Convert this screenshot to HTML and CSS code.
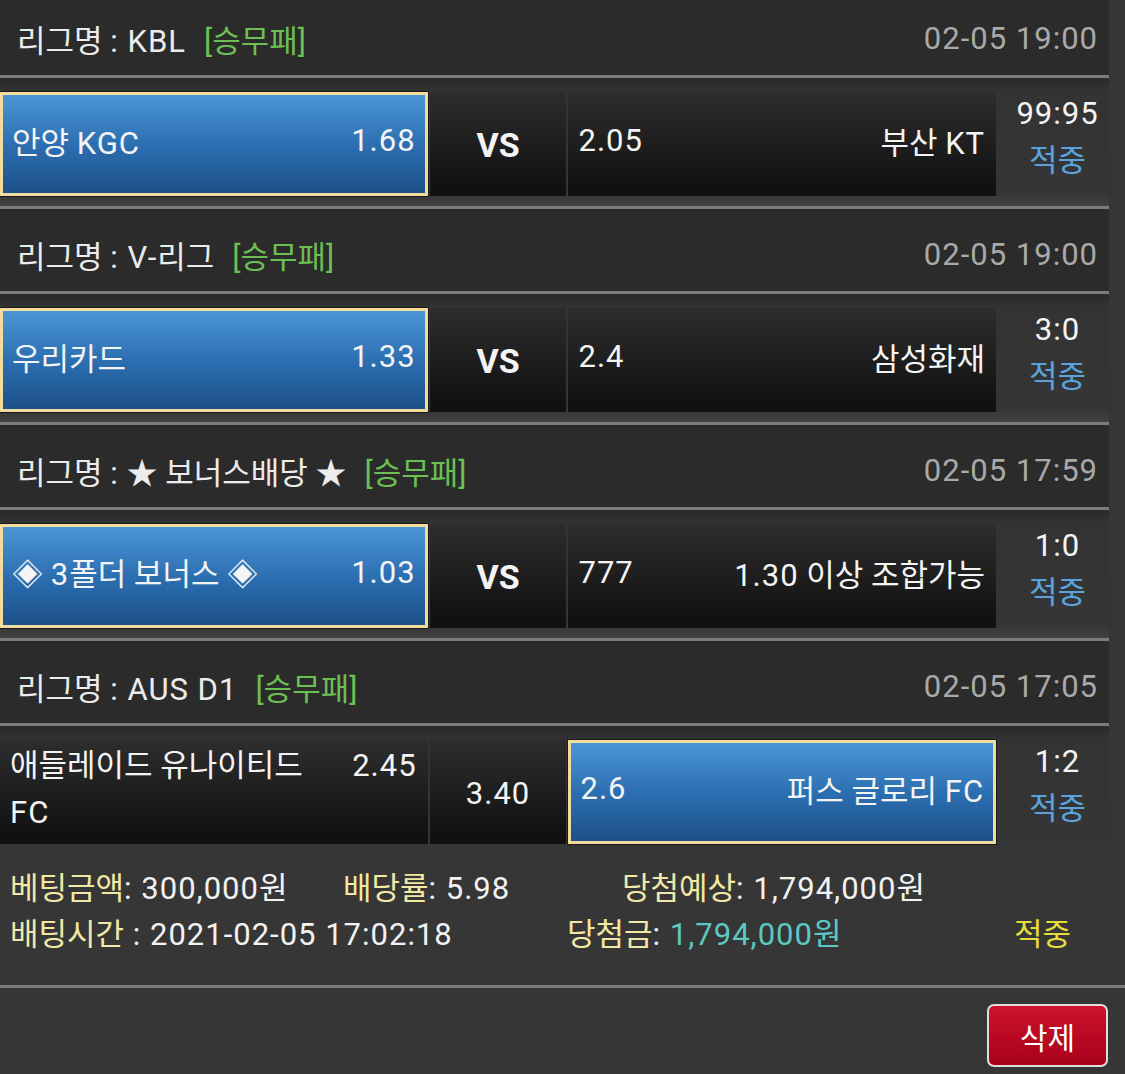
FILE: index.html
```html
<!DOCTYPE html>
<html lang="ko">
<head>
<meta charset="utf-8">
<title>베팅내역</title>
<link rel="stylesheet" href="styles.css">
</head>
<body>
<div class="page">
  <section class="block">
    <div class="league"><span class="lname">리그명 <span class="l">: KBL</span></span><span class="type">[승무패]</span><span class="date l">02-05 19:00</span></div>
    <div class="match">
      <div class="pick side sel"><span class="team">안양 <span class="l">KGC</span></span><span class="odd l">1.68</span></div>
      <div class="pick mid"><b class="vs">VS</b></div>
      <div class="pick side"><span class="odd l">2.05</span><span class="team">부산 <span class="l">KT</span></span></div>
      <div class="score"><div class="l">99:95</div><div class="hit">적중</div></div>
    </div>
  </section>
  <section class="block">
    <div class="league"><span class="lname">리그명 <span class="l">: V-</span>리그</span><span class="type">[승무패]</span><span class="date l">02-05 19:00</span></div>
    <div class="match">
      <div class="pick side sel"><span class="team">우리카드</span><span class="odd l">1.33</span></div>
      <div class="pick mid"><b class="vs">VS</b></div>
      <div class="pick side"><span class="odd l">2.4</span><span class="team">삼성화재</span></div>
      <div class="score"><div class="l">3:0</div><div class="hit">적중</div></div>
    </div>
  </section>
  <section class="block">
    <div class="league"><span class="lname">리그명 <span class="l">:</span> ★ 보너스배당 ★</span><span class="type">[승무패]</span><span class="date l">02-05 17:59</span></div>
    <div class="match">
      <div class="pick side sel"><span class="team">◈ <span class="l">3</span>폴더 보너스 ◈</span><span class="odd l">1.03</span></div>
      <div class="pick mid"><b class="vs">VS</b></div>
      <div class="pick side"><span class="odd l">777</span><span class="team"><span class="l">1.30</span> 이상 조합가능</span></div>
      <div class="score"><div class="l">1:0</div><div class="hit">적중</div></div>
    </div>
  </section>
  <section class="block last">
    <div class="league"><span class="lname">리그명 <span class="l">: AUS D1</span></span><span class="type">[승무패]</span><span class="date l">02-05 17:05</span></div>
    <div class="match">
      <div class="pick side top"><span class="team wrap">애들레이드 유나이티드 <span class="l">FC</span></span><span class="odd l">2.45</span></div>
      <div class="pick mid"><span class="draw l">3.40</span></div>
      <div class="pick side sel"><span class="odd l">2.6</span><span class="team">퍼스 글로리 <span class="l">FC</span></span></div>
      <div class="score"><div class="l">1:2</div><div class="hit">적중</div></div>
    </div>
  </section>
  <div class="summary">
    <div class="sline">
      <span class="c1"><span class="lbl">베팅금액</span><span class="l">: 300,000</span>원</span>
      <span class="c2"><span class="lbl">배당률</span><span class="l">: 5.98</span></span>
      <span class="c3"><span class="lbl">당첨예상</span><span class="l">: 1,794,000</span>원</span>
    </div>
    <div class="sline">
      <span class="c1"><span class="lbl">배팅시간</span><span class="l"> : 2021-02-05 17:02:18</span></span>
      <span class="c4"><span class="lbl">당첨금</span><span class="l">: </span><span class="won"><span class="l">1,794,000</span>원</span></span>
      <span class="c5">적중</span>
    </div>
  </div>
  <div class="actions"><button class="del" type="button">삭제</button></div>
</div>
</body>
</html>
```
FILE: styles.css
```css
html, body {
  margin: 0;
  padding: 0;
  background: #363636;
}
body {
  font-family: Roboto, "Noto Sans CJK KR", "Noto Sans", sans-serif;
  color: #f2f2f2;
  font-size: 31px;
}
.l { letter-spacing: 1px; }
.page {
  width: 1125px;
  margin-top: -7px;
}
.league {
  width: 1109px;
  height: 85px;
  box-sizing: border-box;
  padding: 8px 11px 0 17px;
  background: #2b2b2b;
  border-bottom: 3px solid #7b7b7b;
  display: flex;
  align-items: center;
  white-space: nowrap;
}
.lname { color: #ececec; }
.type { color: #6cbf52; margin-left: 18px; }
.date { color: #a9a9a9; margin-left: auto; }
.match {
  width: 1109px;
  height: 131px;
  box-sizing: border-box;
  padding-top: 14px;
  border-bottom: 3px solid #7b7b7b;
  background: linear-gradient(#2a2a2a 0, #333 14px, #353535 calc(100% - 14px), #414141 100%);
  display: flex;
  align-items: flex-start;
}
.block.last .match {
  border-bottom: 0;
  height: 118px;
  background: linear-gradient(#2a2a2a 0, #333 14px, #353535 100%);
}
.pick {
  height: 104px;
  box-sizing: border-box;
  display: flex;
  align-items: center;
  padding-bottom: 8px;
  background: linear-gradient(#2d2d2d, #0f0f0f);
  color: #f4f4f4;
}
.side {
  width: 428px;
  justify-content: space-between;
  padding-left: 10px;
  padding-right: 11px;
}
.side + .mid { margin-left: 2px; }
.mid {
  width: 137px;
  justify-content: center;
  margin-right: 2px;
}
.pick.sel {
  background: linear-gradient(#4b95d6, #2a6cae 55%, #1d5189);
  border: 3px solid #f1dc9b;
  box-shadow: 0 0 0 1px #1a1a1a;
  padding-left: 9px;
  padding-right: 9px;
}
.pick.top {
  align-items: flex-start;
  padding-top: 2px;
  padding-bottom: 0;
  line-height: 47px;
}
.team.wrap {
  max-width: 320px;
}
.vs {
  font-weight: 700;
  font-size: 34px;
  margin-top: 10px;
}
.draw { margin-top: 10px; }
.score {
  width: 113px;
  box-sizing: border-box;
  padding-left: 10px;
  margin-top: -2px;
  text-align: center;
  line-height: 47px;
  color: #f4f4f4;
}
.hit { color: #5aa4de; }
.summary {
  padding: 22px 0 27px 10px;
  border-bottom: 3px solid #7b7b7b;
  line-height: 46px;
}
.sline {
  display: flex;
  white-space: nowrap;
}
.lbl { color: #f2e8a6; }
.c1 { width: 333px; }
.c2 { width: 279px; }
.c4 { margin-left: 224px; width: 447px; }
.c5 { color: #e6dc3c; }
.won { color: #5cc8c2; }
.actions {
  display: flex;
  justify-content: flex-end;
  padding: 16px 17px 0 0;
}
.del {
  width: 121px;
  height: 63px;
  border: 2px solid #e2dcdc;
  border-radius: 7px;
  background: linear-gradient(#cc132c, #a8001a);
  color: #fff;
  font-family: inherit;
  font-size: 30px;
  padding: 0;
}
```
